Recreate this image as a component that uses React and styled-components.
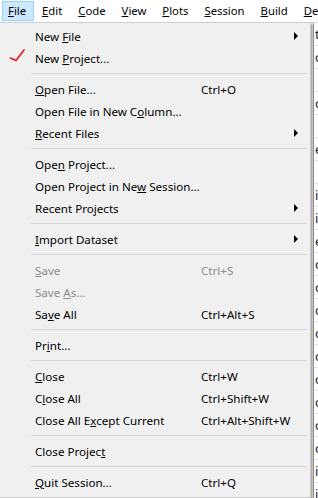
import React from 'react';
import styled, { createGlobalStyle } from 'styled-components';

const Global = createGlobalStyle`
  html, body { margin: 0; padding: 0; background: #ffffff; }
  body { font-family: "Noto Sans", "Open Sans", sans-serif; font-size: 12px; color: #000; }
`;

const Page = styled.div`
  position: relative;
  width: 318px;
  height: 498px;
  overflow: hidden;
  background: #ffffff;
`;

const MenuBar = styled.div`
  display: flex;
  align-items: center;
  height: 22px;
  padding-left: 2px;
  background: #ffffff;
  white-space: nowrap;
`;

const BarItem = styled.div`
  flex-shrink: 0;
  height: 20px;
  line-height: 18px;
  padding: 0 7px 0 5px;
  margin-right: 2px;
  box-sizing: border-box;
  border: 1px solid ${p => (p.$active ? '#99d1ff' : 'transparent')};
  background: ${p => (p.$active ? '#cce8ff' : 'transparent')};
  font-size: 11.3px;
`;

const Editor = styled.div`
  display: flex;
  flex-direction: column;
  padding-left: 313px;
  border-top: 1px solid #dadada;
`;

const EditorRow = styled.div`
  height: 22px;
  line-height: 22px;
  border-bottom: 1px solid #e3e3e3;
  border-left: 1px solid #a0a0a0;
  padding-left: 1px;
  font-size: 13px;
  color: #222;
`;

const Dropdown = styled.div`
  position: absolute;
  top: 22px;
  left: 0;
  width: 311px;
  padding: 2px 0 4px;
  background: #f0f0f0;
  border: 1px solid #cccccc;
  border-left: none;
  box-shadow: 2px 2px 2px rgba(0, 0, 0, 0.35);
  box-sizing: border-box;
`;

const Item = styled.div`
  position: relative;
  display: grid;
  grid-template-columns: 166px 1fr 16px;
  align-items: center;
  height: 22px;
  padding-left: 35px;
  color: ${p => (p.$disabled ? '#8c8c8c' : '#000')};
  white-space: nowrap;
  font-size: 11.6px;
`;

const Shortcut = styled.span``;

const Arrow = styled.span`
  width: 0;
  height: 0;
  border-top: 4px solid transparent;
  border-bottom: 4px solid transparent;
  border-left: 4px solid #000;
  justify-self: start;
`;

const Sep = styled.div`
  height: 1px;
  margin: 4px 3px 4px 31px;
  background: #d5d5d5;
`;

const Check = styled.svg`
  position: absolute;
  left: 9px;
  top: 2px;
`;

const U = styled.span`
  text-decoration: underline;
`;

const menus = [
  ['F', 'ile'], ['E', 'dit'], ['C', 'ode'], ['V', 'iew'], ['P', 'lots'], ['S', 'ession'], ['B', 'uild'], ['D', 'ebug'],
];

const items = [
  { pre: 'New ', u: 'F', post: 'ile', sub: true },
  { pre: 'New ', u: 'P', post: 'roject...', check: true },
  'sep',
  { pre: '', u: 'O', post: 'pen File...', key: 'Ctrl+O' },
  { pre: 'Open File in New C', u: 'o', post: 'lumn...' },
  { pre: '', u: 'R', post: 'ecent Files', sub: true },
  'sep',
  { pre: 'Ope', u: 'n', post: ' Project...' },
  { pre: 'Open Project in Ne', u: 'w', post: ' Session...' },
  { pre: 'Recent Pro', u: 'j', post: 'ects', sub: true },
  'sep',
  { pre: '', u: 'I', post: 'mport Dataset', sub: true },
  'sep',
  { pre: '', u: 'S', post: 'ave', key: 'Ctrl+S', disabled: true },
  { pre: 'Save ', u: 'A', post: 's...', disabled: true },
  { pre: 'Sa', u: 'v', post: 'e All', key: 'Ctrl+Alt+S' },
  'sep',
  { pre: 'Pr', u: 'i', post: 'nt...' },
  'sep',
  { pre: '', u: 'C', post: 'lose', key: 'Ctrl+W' },
  { pre: 'C', u: 'l', post: 'ose All', key: 'Ctrl+Shift+W' },
  { pre: 'Close All E', u: 'x', post: 'cept Current', key: 'Ctrl+Alt+Shift+W' },
  'sep',
  { pre: 'Close Projec', u: 't', post: '' },
  'sep',
  { pre: '', u: 'Q', post: 'uit Session...', key: 'Ctrl+Q' },
];

const behind = ['t', 'o', '', 'o', '', 'e', '', 'i', 'i', 'e', 'o', 'o', 'o', 'o', 'o', 'o', 'o', 'o', 'o', 'i', 'i', '', ''];

export default function App() {
  return (
    <Page>
      <Global />
      <MenuBar>
        {menus.map(([u, rest], i) => (
          <BarItem key={i} $active={i === 0}>
            <U>{u}</U>{rest}
          </BarItem>
        ))}
      </MenuBar>
      <Editor>
        {behind.map((c, i) => (
          <EditorRow key={i}>{c}</EditorRow>
        ))}
      </Editor>
      <Dropdown>
        {items.map((it, i) =>
          it === 'sep' ? (
            <Sep key={i} />
          ) : (
            <Item key={i} $disabled={it.disabled}>
              {it.check && (
                <Check width="18" height="16" viewBox="0 0 18 16">
                  <path d="M1.5 9 L7 11.5 L15 1" fill="none" stroke="#e8201c" strokeWidth="1.7" strokeLinecap="round" strokeLinejoin="round" />
                </Check>
              )}
              <span>
                {it.pre}
                <U>{it.u}</U>
                {it.post}
              </span>
              <Shortcut>{it.key || ''}</Shortcut>
              {it.sub ? <Arrow /> : <span />}
            </Item>
          )
        )}
      </Dropdown>
    </Page>
  );
}
